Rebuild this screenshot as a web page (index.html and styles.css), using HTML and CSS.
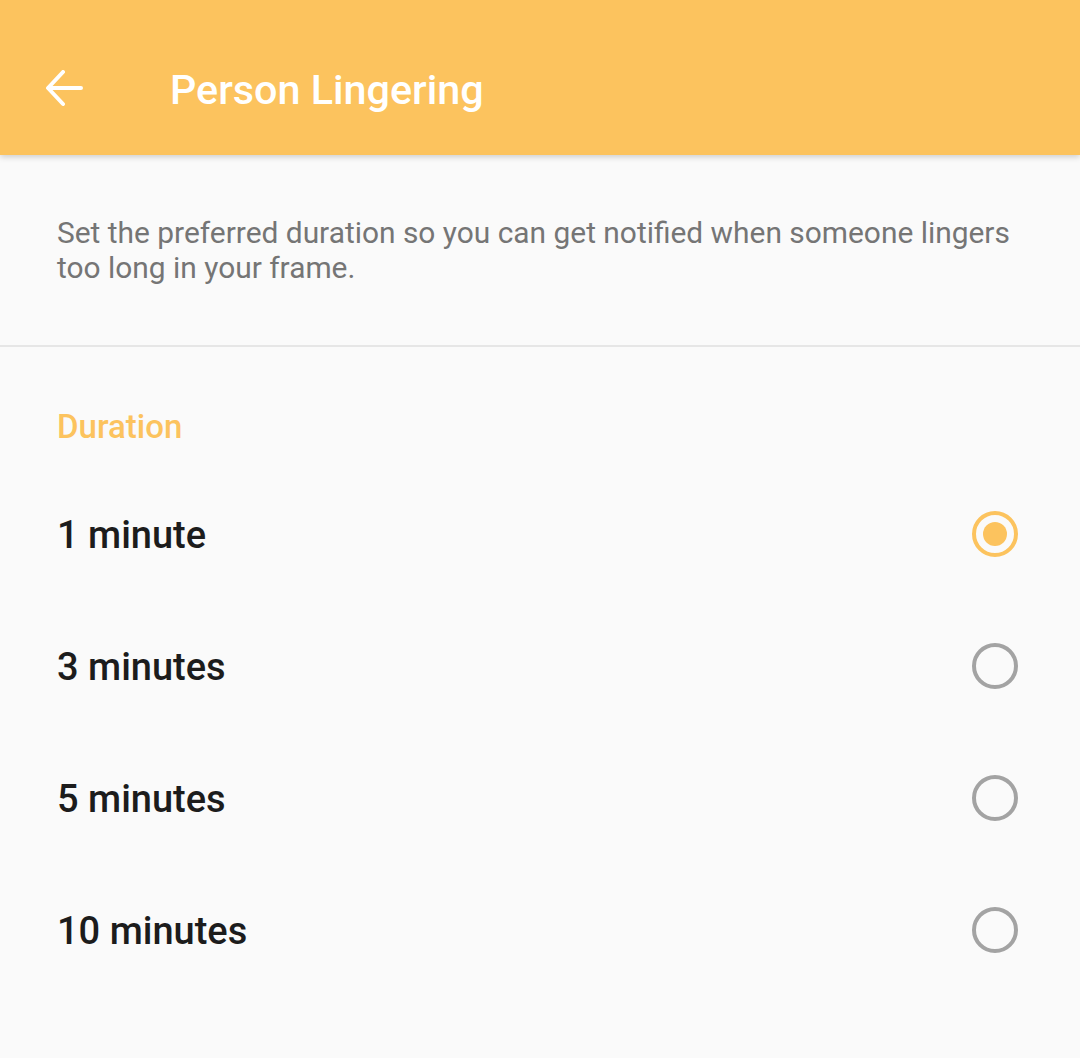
FILE: index.html
```html
<!DOCTYPE html>
<html>
<head>
<meta charset="utf-8">
<link rel="stylesheet" href="styles.css">
</head>
<body>
<header class="toolbar">
  <button class="back" aria-label="Back">
    <svg width="40" height="40" viewBox="0 0 40 40"><path d="M36 18 H4 M18 2 L3 18 L18 34" fill="none" stroke="#fff" stroke-width="4" stroke-linecap="round" stroke-linejoin="round"/></svg>
  </button>
  <h1 class="title">Person Lingering</h1>
</header>
<section class="intro">
  <p>Set the preferred duration so you can get notified when someone lingers too long in your frame.</p>
</section>
<section class="options">
  <h2 class="section-title">Duration</h2>
  <label class="option"><span>1 minute</span><span class="radio checked"></span></label>
  <label class="option"><span>3 minutes</span><span class="radio"></span></label>
  <label class="option"><span>5 minutes</span><span class="radio"></span></label>
  <label class="option"><span>10 minutes</span><span class="radio"></span></label>
</section>
</body>
</html>
```

FILE: styles.css
```css
* { box-sizing: border-box; }
html, body { margin: 0; padding: 0; }
body {
  background: #fafafa;
  font-family: Roboto, "Noto Sans", sans-serif;
  width: 1080px;
  height: 1058px;
  overflow: hidden;
}
.toolbar {
  height: 155px;
  padding-top: 24px;
  background: #fcc35e;
  display: flex;
  align-items: center;
  box-shadow: 0 2px 6px rgba(0,0,0,0.18);
  position: relative;
  z-index: 1;
}
.back {
  background: none;
  border: 0;
  padding: 0;
  margin-left: 45px;
  width: 40px;
  height: 40px;
  display: flex;
  align-items: center;
  justify-content: center;
}
.title {
  margin: 0 0 0 85px;
  color: #fff;
  font-size: 41.3px;
  font-weight: 500;
  letter-spacing: 0;
}
.intro {
  padding: 60px 57px 0 57px;
  height: 192px;
  border-bottom: 2px solid #e6e6e6;
}
.intro p {
  margin: 0;
  font-size: 29.9px;
  line-height: 35px;
  color: #757575;
}
.options {
  padding: 0 57px;
}
.section-title {
  margin: 0;
  padding-top: 58px;
  font-size: 33px;
  line-height: 44px;
  font-weight: 500;
  color: #fcc35e;
}
.option {
  display: flex;
  align-items: center;
  justify-content: space-between;
  height: 132px;
  font-size: 38px;
  font-weight: 500;
  color: #1c1c1c;
}
.options .option:first-of-type { margin-top: 20px; }
.radio {
  width: 46px;
  height: 46px;
  border-radius: 50%;
  border: 4px solid #a3a3a3;
  margin-right: 5px;
  margin-top: -3px;
  display: flex;
  align-items: center;
  justify-content: center;
}
.radio.checked { border-color: #fcc35e; }
.radio.checked::after {
  content: "";
  width: 24px;
  height: 24px;
  border-radius: 50%;
  background: #fcc35e;
}
```
